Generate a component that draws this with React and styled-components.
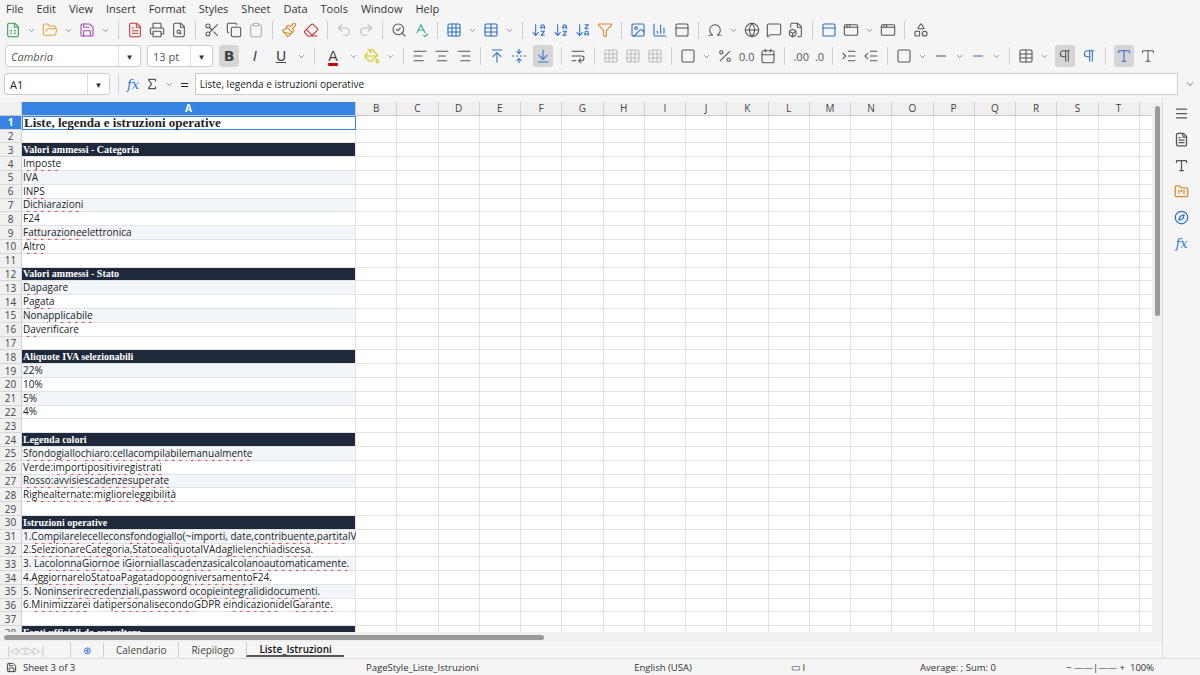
import React from "react";
import styled, { createGlobalStyle } from "styled-components";
import {
  FileSpreadsheet, FolderOpen, Save, FileText, Printer, FileSearch, Scissors, Copy, Clipboard,
  Paintbrush, Eraser, Undo2, Redo2, SearchCheck, SpellCheck, Grid3x3, Table, ArrowDownAZ,
  ArrowDownZA, Filter, Image, BarChart3, Sigma, Omega, Globe, MessageSquare, FileBox,
  PanelTop, AppWindow, Shapes, AlignLeft, AlignCenter, AlignRight, ArrowUpToLine,
  FoldVertical, ArrowDownToLine, WrapText, Percent, Calendar, Indent, Outdent, Square,
  Minus, PaintBucket, Pilcrow, Menu, Type, Compass, FolderKanban, ChevronDown,
} from "lucide-react";

const Global = createGlobalStyle`
  body { margin: 0; font-family: "Open Sans", "Noto Sans", sans-serif; font-size: 11px; color: #222; background: #fff; }
  * { box-sizing: border-box; }
`;

const Page = styled.div`
  width: 1200px; height: 675px; overflow: hidden; display: flex; flex-direction: column; background: #f5f5f5;
`;
const MenuBar = styled.div`
  height: 17px; display: flex; gap: 13px; padding: 0 6px; align-items: center; font-size: 11px; color: #333;
`;
const ToolRow = styled.div`
  height: 26px; display: flex; align-items: center; gap: 6px; padding: 0 5px; color: #555;
`;
const Sep = styled.div`width: 1px; height: 18px; background: #ccc; margin: 0 2px;`;
const Combo = styled.div`
  width: ${p => p.w}px; height: 22px; display: flex; align-items: center; justify-content: space-between;
  border: 1px solid #ccc; border-radius: 3px; background: #fff; padding-left: 5px; font-size: 11px;
  font-style: ${p => (p.$italic ? "italic" : "normal")};
`;
const ComboArrow = styled.div`
  width: 22px; height: 100%; border-left: 1px solid #ddd; display: flex; align-items: center; justify-content: center;
  color: #333; font-size: 8px;
`;
const Toggle = styled.div`
  height: 22px; min-width: 20px; display: flex; align-items: center; justify-content: center; border-radius: 3px;
  background: ${p => (p.$on ? "#d6d6d6" : "transparent")}; font-size: 14px; color: #444;
  font-weight: ${p => (p.$bold ? 700 : 400)}; font-style: ${p => (p.$italic ? "italic" : "normal")};
  text-decoration: ${p => (p.$under ? "underline" : "none")}; font-family: "DejaVu Sans", sans-serif;
`;
const FontColor = styled(Toggle)`
  text-decoration-color: #c00; text-decoration-thickness: 3px;
`;
const FormulaRow = styled.div`
  height: 28px; display: flex; align-items: center; gap: 6px; padding: 0 4px; margin-top: 1px;
`;
const Input = styled.div`
  flex: 1; height: 22px; border: 1px solid #ccc; background: #fff; display: flex; align-items: center;
  padding-left: 4px; font-size: 10px;
`;
const Fx = styled.span`font-family: "DejaVu Serif", serif; font-style: italic; color: #2a7bd5; font-size: 13px;`;
const Eq = styled.span`font-size: 15px;`;

const Main = styled.div`flex: 1; display: flex; min-height: 0;`;
const SheetArea = styled.div`flex: 1; display: flex; flex-direction: column; min-width: 0; margin-top: 4px;`;
const GridWrap = styled.div`flex: 1; display: flex; min-height: 0; background: #fff;`;
const Grid = styled.div`
  flex: 1; overflow: hidden; display: grid;
  grid-template-columns: 22px 334px repeat(20, 41.25px);
  grid-auto-rows: 13.8px;
`;
const ColHead = styled.div`
  background: ${p => (p.$sel ? "#3584e4" : "#f0f0f0")}; color: ${p => (p.$sel ? "#fff" : "#444")};
  border-right: 1px solid #d0d0d0; border-bottom: 1px solid #c8c8c8; font-size: 10px;
  display: flex; align-items: center; justify-content: center; font-weight: ${p => (p.$sel ? 700 : 400)};
`;
const RowHead = styled(ColHead)`
  border-bottom: 1px solid #d8d8d8;
`;
const Cell = styled.div`
  border-right: 1px solid #e2e2e2; border-bottom: 1px solid #e2e2e2; white-space: nowrap; overflow: visible;
  padding-left: 1px; display: flex; align-items: flex-end; line-height: 13px; font-size: 10px;
  background: ${p => (p.$kind === "head" ? "#1e293b" : p.$kind === "alt" ? "#f2f5f9" : "#fff")};
  color: ${p => (p.$kind === "head" ? "#fff" : "#222")};
  font-family: ${p => (p.$serif ? '"Liberation Serif", "DejaVu Serif", serif' : '"Open Sans", sans-serif')};
  font-weight: ${p => (p.$serif ? 700 : 400)};
  ${p => p.$big && "font-size: 13px; border: 1.5px solid #3584e4; line-height: 13px;"}
`;
const Wavy = styled.span`text-decoration: underline wavy #d33; text-decoration-thickness: 1px; text-underline-offset: 2px;`;
const VScroll = styled.div`width: 10px; background: #f0f0f0; display: flex; justify-content: center; padding-top: 4px;`;
const Thumb = styled.div`width: 5px; height: 210px; border-radius: 3px; background: #9a9a9a;`;
const HScroll = styled.div`height: 10px; background: #f0f0f0; display: flex; align-items: center; padding-left: 4px;`;
const HThumb = styled.div`height: 5px; width: 540px; border-radius: 3px; background: #9a9a9a;`;
const Tabs = styled.div`height: 16px; display: flex; align-items: center; font-size: 10px; color: #444; padding-left: 6px;`;
const Nav = styled.span`color: #bbb; width: 64px; letter-spacing: -1px;`;
const Tab = styled.div`
  padding: 0 12px; height: 14px; display: flex; align-items: center; border-left: 1px solid #ccc;
  font-weight: ${p => (p.$on ? 600 : 400)}; color: ${p => (p.$on ? "#111" : "#444")};
  border-bottom: ${p => (p.$on ? "2px solid #555" : "none")};
`;
const Plus = styled.span`color: #2a6fc8;`;
const Side = styled.div`
  width: 38px; border-left: 1px solid #ddd; display: flex; flex-direction: column; align-items: center;
  gap: 11px; padding-top: 8px; color: #555;
`;
const Status = styled.div`
  height: 17px; display: flex; align-items: center; font-size: 9.5px; color: #333; border-top: 1px solid #ddd;
`;
const StatusCell = styled.div`
  width: ${p => p.w}px; padding-left: 6px; display: flex; align-items: center; gap: 6px;
  justify-content: ${p => (p.$center ? "center" : "flex-start")};
`;

const cols = "ABCDEFGHIJKLMNOPQRSTU".split("");
const H = "head";
const rows = [
  ["title", "Liste, legenda e istruzioni operative"],
  [], [H, "Valori ammessi - Categoria"],
  ["", "~Imposte"], ["", "IVA"], ["", "~INPS"], ["", "~Dichiarazioni"], ["", "F24"],
  ["", "~Fatturazione elettronica"], ["", "~Altro"], [],
  [H, "Valori ammessi - Stato"], ["", "~Da pagare"], ["", "~Pagata"], ["", "Non ~applicabile"], ["", "~Da verificare"], [],
  [H, "Aliquote IVA selezionabili"], ["", "22%"], ["", "10%"], ["", "5%"], ["", "4%"], [],
  [H, "Legenda colori"], ["", "~Sfondo ~giallo ~chiaro: ~cella ~compilabile ~manualmente"], ["", "Verde: ~importi ~positivi ~registrati"],
  ["", "~Rosso: ~avvisi e ~scadenze ~superate"], ["", "~Righe ~alternate: ~migliore ~leggibilità"], [],
  [H, "Istruzioni operative"],
  ["", "1. ~Compilare le ~celle con ~sfondo ~giallo (~importi, date, ~contribuente, ~partita IVA)."],
  ["", "2. ~Selezionare ~Categoria, ~Stato e ~aliquota IVA ~dagli ~elenchi a ~discesa."],
  ["", "3. La ~colonna ~Giorno e i ~Giorni alla ~scadenza si ~calcolano ~automaticamente."],
  ["", "4. ~Aggiornare lo ~Stato a ~Pagata ~dopo ~ogni ~versamento F24."],
  ["", "5. Non ~inserire ~credenziali, password o ~copie ~integrali di ~documenti."],
  ["", "6. ~Minimizzare i dati ~personali ~secondo GDPR e ~indicazioni del ~Garante."],
  [], [H, "Fonti ufficiali da consultare"], [], [],
];

const renderText = t =>
  t.split(" ").map((w, i) => (
    <React.Fragment key={i}>
      {i > 0 && " "}
      {w.startsWith("~") ? <Wavy>{w.slice(1)}</Wavy> : w}
    </React.Fragment>
  ));

const I = ({ as: C, c, s = 16 }) => <C size={s} color={c || "#555"} strokeWidth={1.6} />;
const Dd = () => <I as={ChevronDown} s={9} />;

export default function App() {
  return (
    <Page>
      <Global />
      <MenuBar>
        {["File", "Edit", "View", "Insert", "Format", "Styles", "Sheet", "Data", "Tools", "Window", "Help"].map(m => (
          <span key={m}>{m}</span>
        ))}
      </MenuBar>
      <ToolRow>
        <I as={FileSpreadsheet} c="#2e9e44" /><Dd />
        <I as={FolderOpen} c="#e8a33c" /><Dd />
        <I as={Save} c="#a744b8" /><Dd /><Sep />
        <I as={FileText} c="#c33" /><I as={Printer} /><I as={FileSearch} /><Sep />
        <I as={Scissors} /><I as={Copy} /><I as={Clipboard} c="#aaa" /><Sep />
        <I as={Paintbrush} c="#d88a2a" /><I as={Eraser} c="#c33" /><Sep />
        <I as={Undo2} c="#bbb" /><I as={Redo2} c="#bbb" /><Sep />
        <I as={SearchCheck} /><I as={SpellCheck} c="#3a8" /><Sep />
        <I as={Grid3x3} c="#2a6fc8" /><Dd /><I as={Table} c="#2a6fc8" /><Dd /><Sep />
        <I as={ArrowDownAZ} c="#2a6fc8" /><I as={ArrowDownAZ} c="#2a6fc8" /><I as={ArrowDownZA} c="#2a6fc8" /><I as={Filter} c="#d88a2a" /><Sep />
        <I as={Image} c="#2a6fc8" /><I as={BarChart3} c="#2a6fc8" /><I as={PanelTop} /><Sep />
        <I as={Omega} /><Dd /><I as={Globe} /><I as={MessageSquare} /><I as={FileBox} /><Sep />
        <I as={PanelTop} c="#2a6fc8" /><I as={AppWindow} /><Dd /><I as={AppWindow} /><Sep /><I as={Shapes} />
      </ToolRow>
      <ToolRow>
        <Combo w={136} $italic>Cambria<ComboArrow>▼</ComboArrow></Combo>
        <Combo w={66}>13 pt<ComboArrow>▼</ComboArrow></Combo>
        <Toggle $on $bold>B</Toggle><Toggle $italic>I</Toggle><Toggle $under>U</Toggle><Dd /><Sep />
        <FontColor $under>A</FontColor><Dd />
        <I as={PaintBucket} c="#d6c400" /><Dd /><Sep />
        <I as={AlignLeft} /><I as={AlignCenter} /><I as={AlignRight} /><Sep />
        <I as={ArrowUpToLine} c="#2a6fc8" /><I as={FoldVertical} c="#2a6fc8" /><Toggle $on><I as={ArrowDownToLine} c="#2a6fc8" /></Toggle><Sep />
        <I as={WrapText} /><Sep /><I as={Grid3x3} c="#bbb" /><I as={Grid3x3} c="#bbb" /><I as={Grid3x3} c="#bbb" /><Sep />
        <I as={Square} /><Dd /><I as={Percent} /><span>0.0</span><I as={Calendar} /><Sep />
        <span>.00</span><span>.0</span><Sep /><I as={Indent} /><I as={Outdent} /><Sep />
        <I as={Square} /><Dd /><I as={Minus} /><Dd />
        <I as={Minus} c="#2a6fc8" /><Dd /><Sep /><I as={Table} /><Dd />
        <Toggle $on><I as={Pilcrow} /></Toggle><I as={Pilcrow} c="#2a6fc8" /><Sep /><Toggle $on><I as={Type} c="#2a6fc8" /></Toggle><I as={Type} />
      </ToolRow>
      <FormulaRow>
        <Combo w={106}>A1<ComboArrow>▼</ComboArrow></Combo>
        <Sep /><Fx>fx</Fx><Sigma size={14} color="#555" /><Dd /><Eq>=</Eq>
        <Input>Liste, legenda e istruzioni operative</Input>
        <I as={ChevronDown} s={12} />
      </FormulaRow>
      <Main>
        <SheetArea>
          <GridWrap>
            <Grid>
              <ColHead />
              {cols.map(c => <ColHead key={c} $sel={c === "A"}>{c}</ColHead>)}
              {rows.map((r, i) => {
                const n = i + 1;
                const [kind, text] = r;
                const isHead = kind === H;
                const cellKind = isHead ? "head" : text && n % 2 === 1 && kind !== "title" ? "alt" : "";
                return (
                  <React.Fragment key={n}>
                    <RowHead $sel={n === 1}>{n}</RowHead>
                    <Cell $kind={cellKind} $serif={isHead || kind === "title"} $big={kind === "title"}>
                      {text && renderText(text)}
                    </Cell>
                    {cols.slice(1).map(c => <Cell key={c} />)}
                  </React.Fragment>
                );
              })}
            </Grid>
            <VScroll><Thumb /></VScroll>
          </GridWrap>
          <HScroll><HThumb /></HScroll>
          <Tabs>
            <Nav>|◁◁ ▷▷|</Nav>
            <Tab><Plus>⊕</Plus></Tab>
            <Tab>Calendario</Tab><Tab>Riepilogo</Tab><Tab $on>Liste_Istruzioni</Tab>
          </Tabs>
        </SheetArea>
        <Side>
          <Menu size={15} /><FileText size={15} /><Type size={15} /><FolderKanban size={15} color="#d88a2a" />
          <Compass size={15} color="#2a6fc8" /><Fx>fx</Fx>
        </Side>
      </Main>
      <Status>
        <StatusCell w={190}><Save size={11} />Sheet 3 of 3</StatusCell>
        <StatusCell w={170} />
        <StatusCell w={220}>PageStyle_Liste_Istruzioni</StatusCell>
        <StatusCell w={160} $center>English (USA)</StatusCell>
        <StatusCell w={110} $center>▭ I</StatusCell>
        <StatusCell w={210} $center>Average: ; Sum: 0</StatusCell>
        <StatusCell w={140}>− ——|—— +&nbsp;&nbsp;100%</StatusCell>
      </Status>
    </Page>
  );
}
